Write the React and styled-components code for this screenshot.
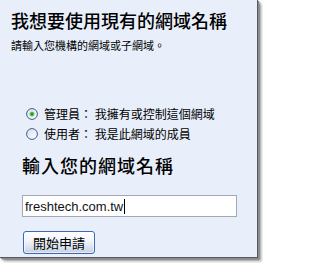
import React from "react";
import styled, { createGlobalStyle } from "styled-components";

const Global = createGlobalStyle`
  html, body { margin: 0; padding: 0; background: #ffffff; }
  body { font-family: "Noto Sans CJK TC", "Liberation Sans", sans-serif; }
`;

const Frame = styled.div`
  width: 263px;
  height: 263px;
  background: #ffffff;
  overflow: hidden;
`;

const Panel = styled.div`
  box-sizing: border-box;
  width: 258px;
  height: 258px;
  background: #e8effb;
  border-right: 1px solid #555a60;
  border-bottom: 1px solid #555a60;
  box-shadow: 1px 1px 0 #8a8a8a, 2px 2px 2px rgba(0, 0, 0, 0.45), 4px 4px 3px rgba(0, 0, 0, 0.2);
  display: flex;
  flex-direction: column;
  padding: 11px 0 0 11px;
  color: #000;
`;

const Title = styled.h1`
  margin: ${(p) => p.$top || "0px"} 0 0 ${(p) => p.$indent || "0px"};
  font-family: "Noto Sans CJK TC", sans-serif;
  font-size: 18px;
  line-height: 18px;
  font-weight: 500;
  letter-spacing: ${(p) => p.$spacing || "0px"};
`;

const Hint = styled.p`
  margin: 11px 0 0 0;
  font-size: 11px;
  line-height: 11px;
`;

const Options = styled.div`
  display: flex;
  flex-direction: column;
  margin: 53px 0 0 15px;
`;

const OptionRow = styled.label`
  display: flex;
  align-items: center;
  height: 20px;
  gap: 6px;
  font-size: 12px;
  line-height: 12px;
`;

const Field = styled.div`
  box-sizing: border-box;
  margin: 21px 0 0 11px;
  width: 215px;
  height: 22px;
  background: #ffffff;
  border: 1px solid #a3a9b2;
  display: flex;
  align-items: center;
  padding-left: 2px;
  font-family: "Liberation Sans", Arial, sans-serif;
  font-size: 13px;
  color: #111;
`;

const Caret = styled.span`
  display: inline-block;
  width: 1px;
  height: 15px;
  background: #000;
  margin-left: 1px;
`;

const Button = styled.button`
  box-sizing: border-box;
  margin: 14px 0 0 12px;
  width: 72px;
  height: 23px;
  padding: 0;
  border: 1px solid #3d68b8;
  border-radius: 3px;
  background: linear-gradient(#ffffff 0%, #f2f5fa 40%, #d3dbe8 85%, #c2cde0 100%);
  box-shadow: inset 0 0 0 1px rgba(255, 255, 255, 0.6);
  font-family: "Noto Sans CJK TC", sans-serif;
  font-size: 13px;
  line-height: 13px;
  color: #000;
  align-self: flex-start;
`;

const Radio = ({ checked }) => {
  const id = checked ? "rg1" : "rg2";
  return (
    <svg width="12" height="12" viewBox="0 0 12 12">
      <defs>
        <linearGradient id={id} x1="0" y1="0" x2="1" y2="1">
          <stop offset="0" stopColor="#d8dde6" />
          <stop offset="1" stopColor="#ffffff" />
        </linearGradient>
      </defs>
      <circle cx="6" cy="6" r="5.4" fill={`url(#${id})`} stroke="#3c5e8e" strokeWidth="1" />
      {checked && (
        <>
          <circle cx="6" cy="6" r="2.6" fill="#8fd68f" />
          <circle cx="6" cy="6" r="1.7" fill="#1f9a1f" />
        </>
      )}
    </svg>
  );
};

export default function App() {
  return (
    <>
      <Global />
      <Frame>
        <Panel>
          <Title>我想要使用現有的網域名稱</Title>
          <Hint>請輸入您機構的網域或子網域。</Hint>
          <Options>
            <OptionRow>
              <Radio checked />
              <span>管理員： 我擁有或控制這個網域</span>
            </OptionRow>
            <OptionRow>
              <Radio />
              <span>使用者： 我是此網域的成員</span>
            </OptionRow>
          </Options>
          <Title $top="12px" $indent="11px" $spacing="1px">輸入您的網域名稱</Title>
          <Field>
            freshtech.com.tw
            <Caret />
          </Field>
          <Button>開始申請</Button>
        </Panel>
      </Frame>
    </>
  );
}
